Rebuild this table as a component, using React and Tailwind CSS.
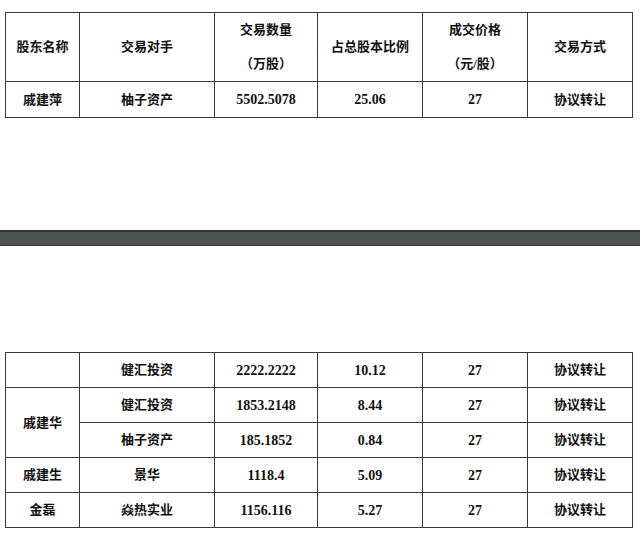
import React from "react";

const font = { fontFamily: '"Liberation Serif", "Noto Sans CJK SC", serif' };

const Cols = () => (
  <colgroup>
    <col className="w-[74px]" />
    <col className="w-[135px]" />
    <col className="w-[103px]" />
    <col className="w-[105px]" />
    <col className="w-[105px]" />
    <col className="w-[105px]" />
  </colgroup>
);

const td = "border border-[#3a3a3a] text-center align-middle p-0 font-bold text-[13px] text-[#111]";

export default function App() {
  const rows2 = [
    ["", "健汇投资", "2222.2222", "10.12", "27", "协议转让"],
    ["戚建华", "健汇投资", "1853.2148", "8.44", "27", "协议转让"],
    [null, "柚子资产", "185.1852", "0.84", "27", "协议转让"],
    ["戚建生", "景华", "1118.4", "5.09", "27", "协议转让"],
    ["金磊", "焱热实业", "1156.116", "5.27", "27", "协议转让"],
  ];
  const num = "text-[14px]";
  return (
    <div className="w-[640px] h-[536px] bg-white overflow-hidden" style={font}>
      <div className="pt-[12px] pl-[5px]">
        <table className="table-fixed border-collapse w-[628px]">
          <Cols />
          <tbody>
            <tr className="h-[69px]">
              <td className={td}>股东名称</td>
              <td className={td}>交易对手</td>
              <td className={td}>
                <div className="leading-[34px]">交易数量</div>
                <div className="leading-[34px]">（万股）</div>
              </td>
              <td className={td}>占总股本比例</td>
              <td className={td}>
                <div className="leading-[34px]">成交价格</div>
                <div className="leading-[34px]">（元/股）</div>
              </td>
              <td className={td}>交易方式</td>
            </tr>
            <tr className="h-[36px]">
              <td className={td}>戚建萍</td>
              <td className={td}>柚子资产</td>
              <td className={`${td} ${num}`}>5502.5078</td>
              <td className={`${td} ${num}`}>25.06</td>
              <td className={`${td} ${num}`}>27</td>
              <td className={td}>协议转让</td>
            </tr>
          </tbody>
        </table>
      </div>
      <div className="mt-[112px] h-[16px] w-full bg-[#4c5154] border-t-2 border-t-[#333] border-b border-b-[#3a3d40]" />
      <div className="pt-[106px] pl-[5px]">
        <table className="table-fixed border-collapse w-[628px]">
          <Cols />
          <tbody>
            {rows2.map((r, i) => (
              <tr key={i} className="h-[35px]">
                {r[0] !== null && (
                  <td className={td} rowSpan={i === 1 ? 2 : 1}>
                    {r[0]}
                  </td>
                )}
                <td className={td}>{r[1]}</td>
                <td className={`${td} ${num}`}>{r[2]}</td>
                <td className={`${td} ${num}`}>{r[3]}</td>
                <td className={`${td} ${num}`}>{r[4]}</td>
                <td className={td}>{r[5]}</td>
              </tr>
            ))}
          </tbody>
        </table>
      </div>
    </div>
  );
}
